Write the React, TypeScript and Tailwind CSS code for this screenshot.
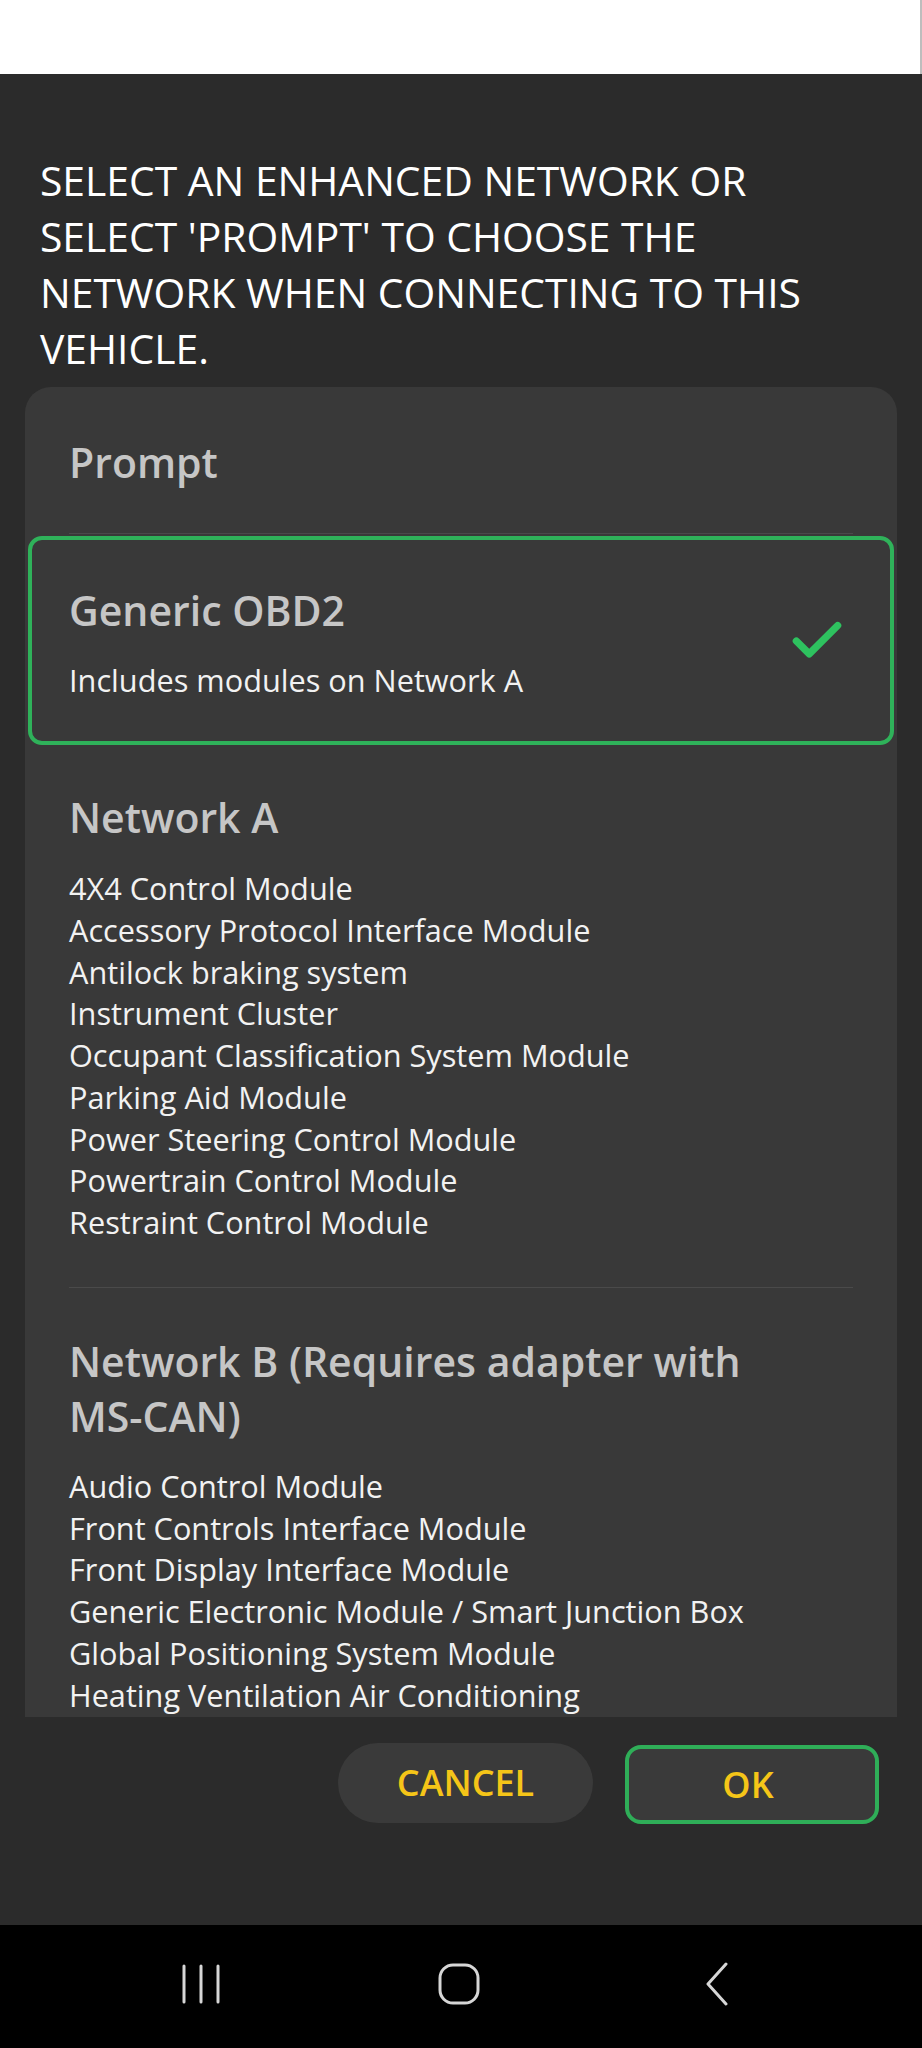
import { Check } from 'lucide-react'

const networkA = [
  '4X4 Control Module',
  'Accessory Protocol Interface Module',
  'Antilock braking system',
  'Instrument Cluster',
  'Occupant Classification System Module',
  'Parking Aid Module',
  'Power Steering Control Module',
  'Powertrain Control Module',
  'Restraint Control Module',
]

const networkB = [
  'Audio Control Module',
  'Front Controls Interface Module',
  'Front Display Interface Module',
  'Generic Electronic Module / Smart Junction Box',
  'Global Positioning System Module',
  'Heating Ventilation Air Conditioning',
]

const font = { fontFamily: '"Open Sans", "Noto Sans", sans-serif' }

function ModuleList({ items }: { items: string[] }) {
  return (
    <ul className="text-[30.7px] leading-[41.75px] text-[#f2f2f2]">
      {items.map((m) => (
        <li key={m}>{m}</li>
      ))}
    </ul>
  )
}

function NavBar() {
  return (
    <div className="h-[123px] bg-black flex items-center justify-center pr-[11px] pb-[6px]">
      {/* recent apps */}
      <svg width="38" height="40" viewBox="0 0 38 40" fill="none" stroke="#d6d6d6" strokeWidth="3" strokeLinecap="round">
        <path d="M2 2v36M19 2v36M36 2v36" />
      </svg>
      {/* home */}
      <svg className="ml-[218px]" width="42" height="42" viewBox="0 0 42 42" fill="none" stroke="#d6d6d6" strokeWidth="3">
        <rect x="2" y="2" width="38" height="38" rx="13" />
      </svg>
      {/* back */}
      <svg className="ml-[225px]" width="24" height="44" viewBox="0 0 24 44" fill="none" stroke="#d6d6d6" strokeWidth="3" strokeLinecap="round" strokeLinejoin="round">
        <path d="M21 2L3 22l18 20" />
      </svg>
    </div>
  )
}

export default function App() {
  return (
    <div className="w-[922px] h-[2048px] flex flex-col overflow-hidden" style={font}>
      <div className="h-[74px] bg-white border-r-2 border-[#bdbdbd]" />

      <div className="flex-1 bg-[#2b2b2b] flex flex-col">
        <h1 className="pt-[78px] pl-[40px] pr-[82px] text-[40.8px] leading-[56px] text-white">
          SELECT AN ENHANCED NETWORK OR SELECT 'PROMPT' TO CHOOSE THE NETWORK WHEN CONNECTING TO THIS VEHICLE.
        </h1>

        {/* scrolling list of networks */}
        <div className="mt-[11px] mx-[25px] h-[1330px] bg-[#393939] rounded-t-[26px] overflow-hidden">
          <div className="mx-[44px] h-[147px] border-b border-[#4a4a4a] pt-[47px]">
            <div className="text-[41px] leading-[56px] font-semibold text-[#c6c6c6]">Prompt</div>
          </div>

          <div className="mx-[3px] mt-[2px] h-[209px] border-4 border-[#2fb25a] rounded-[14px] pl-[37px] pr-[42px] flex items-center justify-between">
            <div className="pt-[1px]">
              <div className="text-[41px] leading-[56px] font-semibold text-[#c6c6c6]">Generic OBD2</div>
              <div className="mt-[21px] text-[30.7px] leading-[42px] text-[#f2f2f2]">Includes modules on Network A</div>
            </div>
            <Check size={62} strokeWidth={2.8} className="text-[#2ec25f]" />
          </div>

          <div className="mx-[44px] pt-[44px] pb-[43px] border-b border-[#4a4a4a]">
            <div className="text-[41px] leading-[56px] font-semibold text-[#c6c6c6]">Network A</div>
            <div className="mt-[23px]">
              <ModuleList items={networkA} />
            </div>
          </div>

          <div className="mx-[44px] pt-[46px]">
            <div className="text-[41px] leading-[55px] font-semibold text-[#c6c6c6]">
              Network B (Requires adapter with <span className="whitespace-nowrap">MS-CAN)</span>
            </div>
            <div className="mt-[22px]">
              <ModuleList items={networkB} />
            </div>
          </div>
        </div>

        <div className="mt-[26px] pr-[43px] flex justify-end gap-[32px]">
          <button className="w-[255px] h-[80px] rounded-full bg-[#3a3a3a] text-[#f5c518] text-[36px] font-semibold">
            CANCEL
          </button>
          <button className="w-[254px] h-[79px] mt-[2px] pr-[8px] rounded-[16px] border-4 border-[#2fae58] bg-[#3a3a3a] text-[#f5c518] text-[36px] font-semibold">
            OK
          </button>
        </div>
      </div>

      <NavBar />
    </div>
  )
}
